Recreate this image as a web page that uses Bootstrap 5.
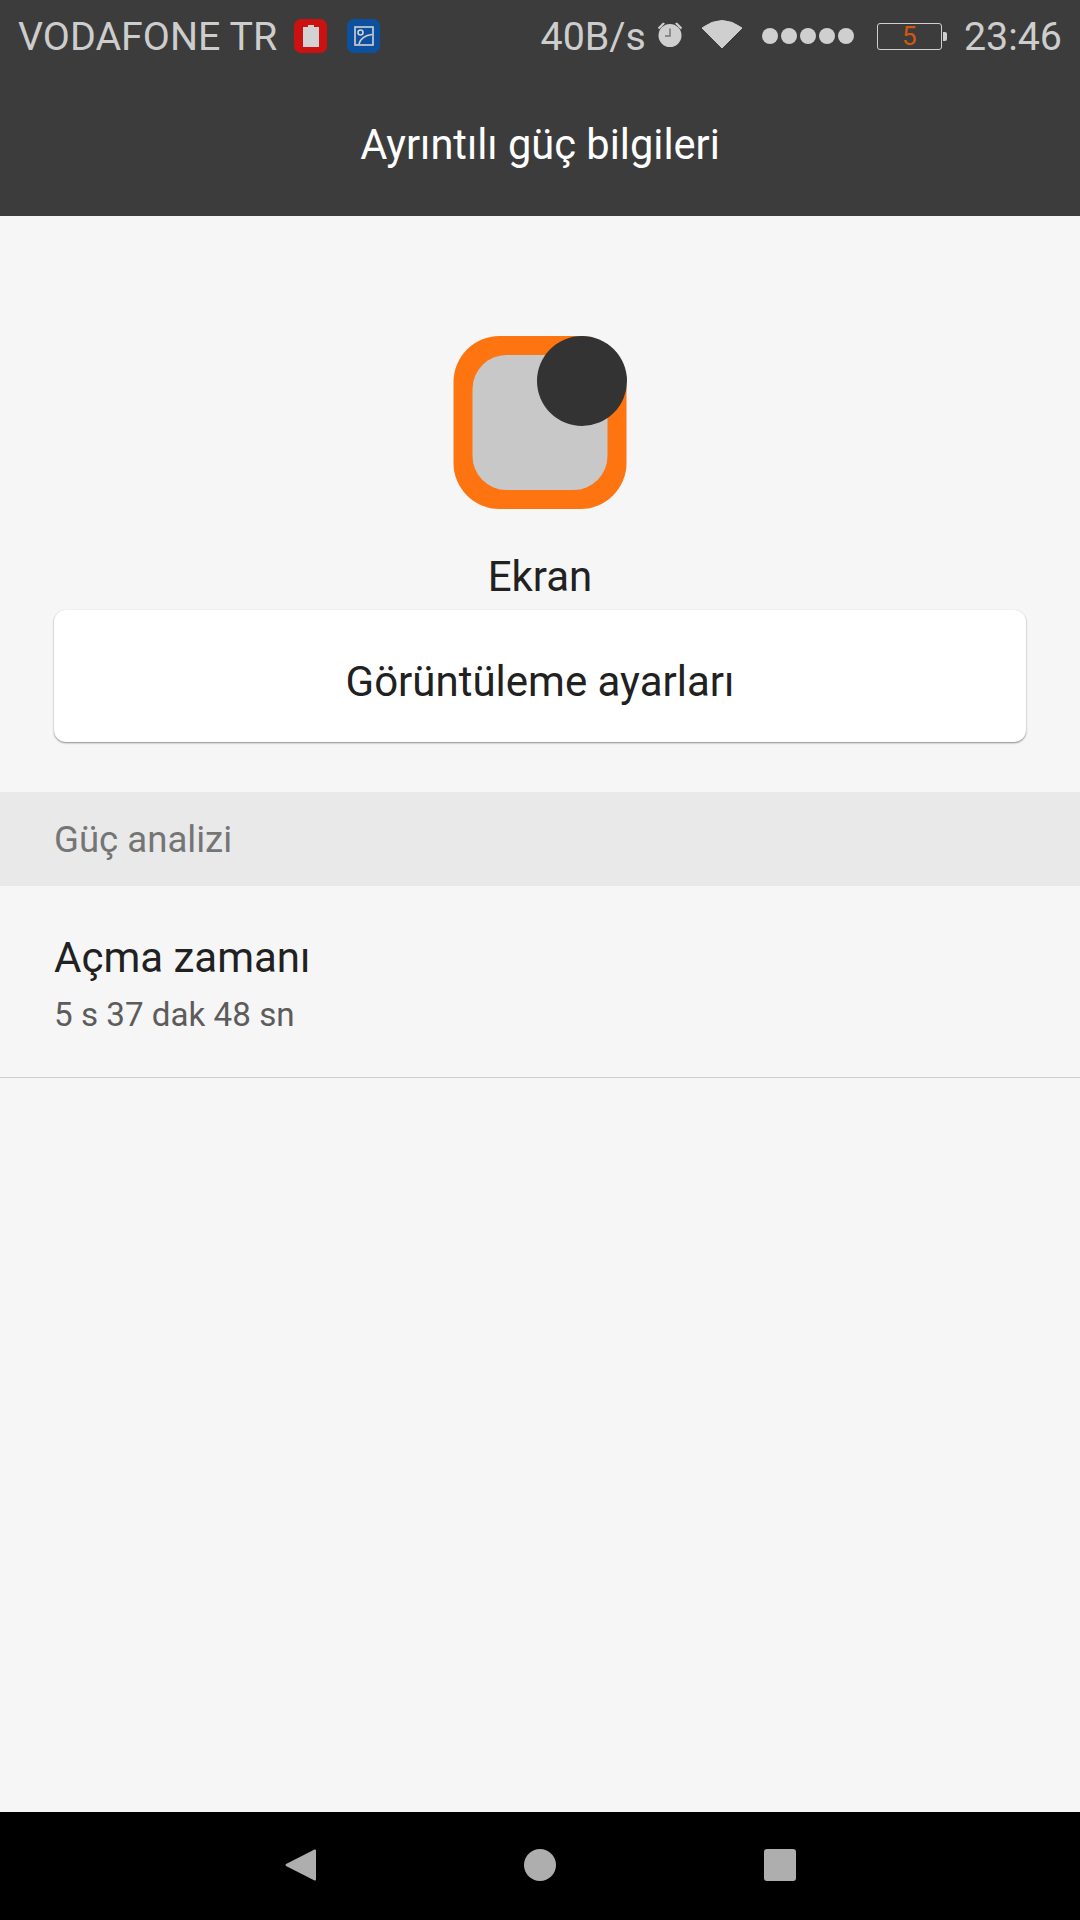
<!DOCTYPE html>
<html lang="tr">
<head>
  <meta charset="UTF-8">
  <title>Ayrıntılı güç bilgileri</title>
  <meta name="viewport" content="width=device-width, initial-scale=1">
  <link href="https://cdn.jsdelivr.net/npm/bootstrap@5.3.2/dist/css/bootstrap.min.css" rel="stylesheet">
  <style>
    body { background: #f6f6f6; font-family: Roboto, "Liberation Sans", sans-serif; color: #212121; }
    .ekran { width: 1080px; height: 1920px; }
    .ust-alan { background: #3c3c3c; height: 216px; }
    .durum { height: 72px; padding: 2px 18px 0 18px; color: #cdcdcd; font-size: 39.4px; line-height: 72px; }
    .simge-kutu { width: 33px; height: 34px; margin-top: -2px; border-radius: 7px; }
    .kirmizi { background: #cc1111; margin-left: 17px; }
    .mavi { background: #0d50a0; margin-left: 20px; }
    .nokta { width: 16px; height: 16px; border-radius: 50%; background: #cfcfcf; }
    .noktalar { gap: 3px; margin-top: -2px; margin-left: 19px; }
    .pil { width: 65px; height: 27px; margin-top: -2px; border: 1px solid #cfcfcf; border-radius: 3px; color: #d2580f; font-size: 26px; line-height: 25px; margin-left: 23px; }
    .pil-uc { width: 4px; height: 9px; margin-top: -2px; background: #cfcfcf; border-radius: 0 2px 2px 0; margin-left: 1px; margin-right: 17px; }
    .baslik { height: 146px; color: #fff; font-size: 41.6px; }
    .uygulama { padding-top: 120px; }
    .uygulama svg { display: block; margin-left: 453px; }
    .ad { font-size: 42px; line-height: 48px; margin-top: 43px; text-align: center; }
    .ayar-kart { margin: 9px 54px 0; height: 132px; padding-top: 10px; border: 0; border-radius: 12px; background: #fff; box-shadow: 0 1px 2px rgba(0,0,0,.45); font-size: 42px; }
    .bolum { margin-top: 50px; height: 94px; padding-top: 2px; background: #e9e9e9; color: #757575; font-size: 36.6px; padding-left: 54px; }
    .satir { height: 192px; padding: 48px 54px 0; border-bottom: 1px solid #cdcdcd; }
    .satir-ust { font-size: 42px; line-height: 48px; }
    .satir-alt { font-size: 33.2px; line-height: 40px; margin-top: 13px; color: #5c5c5c; }
    .alt-cubuk { height: 108px; padding: 0 0 3px 285px; background: #000; }
    .nav-orta { margin-left: 208px; }
  </style>
</head>
<body>
  <div class="ekran d-flex flex-column">

    <div class="ust-alan">
      <div class="durum d-flex align-items-center">
        <span>VODAFONE TR</span>
        <div class="simge-kutu kirmizi d-flex align-items-center justify-content-center">
          <svg width="16" height="22" viewBox="0 0 16 22"><path d="M5 0h6v2h5v20H0V2h5z" fill="#d2d2d2"/></svg>
        </div>
        <div class="simge-kutu mavi d-flex align-items-center justify-content-center">
          <svg width="20" height="20" viewBox="0 0 20 20" fill="none" stroke="#d2d2d2" stroke-width="1.6"><rect x="1" y="1" width="18" height="18"/><circle cx="6.500" cy="6.500" r="2.500"/><path d="M5 18c1-5 6-9 13-9.500"/></svg>
        </div>
        <span class="ms-auto">40B/s</span>
        <svg style="margin:-6px 0 0 10px" width="28" height="29" viewBox="0 0 28 28"><circle cx="14" cy="15" r="11.500" fill="#cfcfcf"/><path d="M14 8v7.500h-5" fill="none" stroke="#777" stroke-width="1.500"/><path d="M2 7l5-5 2 1-6 6zM26 7l-5-5-2 1 6 6z" fill="#cfcfcf"/></svg>
        <svg style="margin:-8px 0 0 17px" width="42" height="31" viewBox="0 0 42 31"><path d="M1 10Q21-5 41 10L21 30z" fill="#cfcfcf" stroke="#cfcfcf" stroke-linejoin="round"/></svg>
        <div class="noktalar d-flex">
          <div class="nokta"></div><div class="nokta"></div><div class="nokta"></div><div class="nokta"></div><div class="nokta"></div>
        </div>
        <div class="pil text-center">5</div>
        <div class="pil-uc"></div>
        <span>23:46</span>
      </div>
      <div class="baslik d-flex align-items-center justify-content-center">Ayrıntılı güç bilgileri</div>
    </div>

    <div class="uygulama">
      <svg width="174" height="174" viewBox="0 0 174 174">
        <rect x=".5" width="173" height="173" rx="46" fill="#fd7410"/>
        <rect x="19.500" y="19" width="135" height="135" rx="34" fill="#c8c8c8"/>
        <circle cx="129" cy="45" r="45" fill="#333"/>
      </svg>
      <div class="ad">Ekran</div>
      <div class="card ayar-kart d-flex align-items-center justify-content-center">Görüntüleme ayarları</div>
    </div>

    <div class="bolum d-flex align-items-center">Güç analizi</div>

    <div class="satir">
      <div class="satir-ust">Açma zamanı</div>
      <div class="satir-alt">5 s 37 dak 48 sn</div>
    </div>

    <div class="flex-grow-1"></div>

    <div class="alt-cubuk d-flex align-items-center">
      <svg width="31" height="32" viewBox="0 0 31 32"><path d="M30 1.500V30.500L1.500 16z" fill="#aeaeae" stroke="#aeaeae" stroke-width="2" stroke-linejoin="round"/></svg>
      <svg class="nav-orta" width="32" height="32" viewBox="0 0 32 32"><circle cx="16" cy="16" r="16" fill="#aeaeae"/></svg>
      <svg class="nav-orta" width="32" height="32" viewBox="0 0 32 32"><rect width="32" height="32" rx="3" fill="#aeaeae"/></svg>
    </div>

  </div>
  <script src="https://cdn.jsdelivr.net/npm/bootstrap@5.3.2/dist/js/bootstrap.bundle.min.js"></script>
</body>
</html>
